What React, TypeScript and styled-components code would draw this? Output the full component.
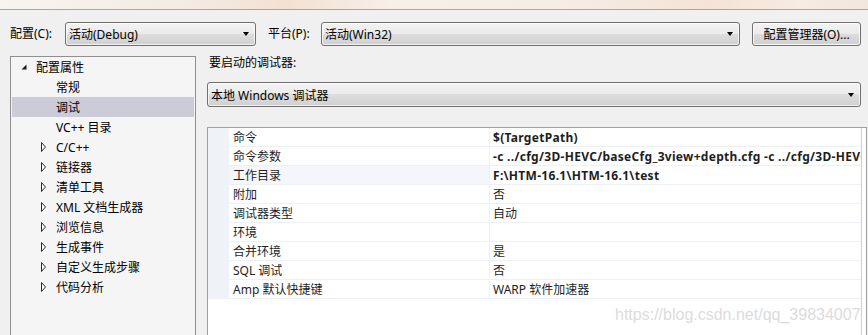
import React from "react";
import styled, { createGlobalStyle } from "styled-components";

const GlobalStyle = createGlobalStyle`
  html, body { margin: 0; padding: 0; background: #f0f0f0; }
  body {
    font-family: "Noto Sans", "Noto Sans CJK SC", sans-serif;
    font-size: 12px;
    color: #000;
  }
  * { box-sizing: border-box; }
`;

const Window = styled.div`
  position: relative;
  width: 868px;
  height: 335px;
  overflow: hidden;
  background: #f0f0f0;
`;

const TitleStrip = styled.div`
  height: 10px;
  border-bottom: 1px solid #a7a7a7;
  background: linear-gradient(
    to right,
    #f8f4f0 0%,
    #f4ece5 20%,
    #f3e1d3 33%,
    #f7efe8 45%,
    #f6ede5 65%,
    #f4e3d6 82%,
    #f7ebe2 92%,
    #f3e6dc 100%
  );
`;

const Toolbar = styled.div`
  display: flex;
  align-items: center;
  height: 24px;
  margin-top: 12px;
  padding-left: 10px;
`;

const Label = styled.div<{ $w: number; $ml?: number }>`
  width: ${(p) => p.$w}px;
  margin-left: ${(p) => p.$ml ?? 0}px;
  white-space: nowrap;
  line-height: 16px;
`;

const Combo = styled.div<{ $w: number; $h?: number; $ml?: number; $mt?: number }>`
  position: relative;
  display: flex;
  align-items: center;
  width: ${(p) => p.$w}px;
  height: ${(p) => p.$h ?? 24}px;
  margin-left: ${(p) => p.$ml ?? 0}px;
  margin-top: ${(p) => p.$mt ?? 0}px;
  padding-left: 3px;
  border: 1px solid #707070;
  border-radius: 3px;
  background: linear-gradient(
    to bottom,
    #f3f3f3 0%,
    #ebebeb 48%,
    #dddddd 50%,
    #d0d0d0 100%
  );
  box-shadow: inset 0 0 0 1px rgba(255, 255, 255, 0.7);
  white-space: nowrap;
`;

const Arrow = styled.div`
  position: absolute;
  right: 6px;
  top: 50%;
  margin-top: -2px;
  width: 0;
  height: 0;
  border-left: 3.5px solid transparent;
  border-right: 3.5px solid transparent;
  border-top: 4px solid #000;
`;

const Button = styled.div<{ $w: number; $ml: number }>`
  display: flex;
  align-items: center;
  justify-content: center;
  width: ${(p) => p.$w}px;
  height: 24px;
  margin-left: ${(p) => p.$ml}px;
  border: 1px solid #707070;
  border-radius: 3px;
  background: linear-gradient(
    to bottom,
    #f2f2f2 0%,
    #ebebeb 48%,
    #dddddd 50%,
    #cfcfcf 100%
  );
  box-shadow: inset 0 0 0 1px rgba(255, 255, 255, 0.8);
  white-space: nowrap;
`;

const Main = styled.div`
  display: flex;
  margin-top: 10px;
  padding-left: 10px;
`;

const TreePanel = styled.div`
  width: 186px;
  height: 300px;
  border: 1px solid #8e8f8f;
  background: #f5f5f5;
  padding: 0 1px;
`;

const TreeRow = styled.div<{ $level: number; $selected?: boolean }>`
  display: flex;
  align-items: center;
  height: 20px;
  padding-left: ${(p) => 9 + p.$level * 20}px;
  background: ${(p) => (p.$selected ? "#cbccd8" : "transparent")};
  white-space: nowrap;
`;

const ExpanderSlot = styled.div`
  width: 15px;
  height: 20px;
  display: flex;
  align-items: center;
`;

const RightPane = styled.div`
  display: flex;
  flex-direction: column;
  margin-left: 11px;
`;

const Caption = styled.div`
  height: 14px;
  line-height: 14px;
  padding-left: 2px;
`;

const PropGrid = styled.div`
  display: flex;
  width: 660px;
  height: 220px;
  margin-top: 20px;
  border: 1px solid #a0a0a0;
  background: #fff;
`;

const GridContent = styled.div`
  width: 654px;
  border-right: 1px solid #cfcfcf;
  overflow: hidden;
`;

const Row = styled.div`
  display: grid;
  grid-template-columns: 21px 261px 1fr;
  height: 19px;
`;

const Margin = styled.div`
  background: #eff2f9;
`;

const NameCell = styled.div<{ $alt?: boolean }>`
  display: flex;
  align-items: center;
  padding-left: 4px;
  border-bottom: 1px solid #eef0f5;
  border-right: 1px solid #eef0f5;
  background: ${(p) => (p.$alt ? "#f4f6fb" : "#fff")};
  color: #1e1e1e;
  white-space: nowrap;
`;

const ValueCell = styled.div<{ $bold?: boolean }>`
  display: flex;
  align-items: center;
  padding-left: 3px;
  border-bottom: 1px solid #eef0f5;
  font-weight: ${(p) => (p.$bold ? 700 : 400)};
  letter-spacing: ${(p) => (p.$bold ? "0.3px" : "0")};
  color: #1e1e1e;
  white-space: nowrap;
  overflow: hidden;
  min-width: 0;
`;

const Watermark = styled.div`
  position: absolute;
  left: 615px;
  top: 306px;
  font-family: "Liberation Sans", Arial, sans-serif;
  font-size: 16px;
  color: #dcdcdc;
  white-space: nowrap;
  pointer-events: none;
`;

const ExpandedIcon = () => (
  <svg width="6" height="6" viewBox="0 0 6 6">
    <polygon points="5.5,0.5 5.5,5.5 0.5,5.5" fill="#1a1a1a" />
  </svg>
);

const CollapsedIcon = () => (
  <svg width="6" height="10" viewBox="0 0 6 10">
    <polygon
      points="0.5,0.5 4.5,5 0.5,9.5"
      fill="#fff"
      stroke="#2a2a2a"
      strokeWidth="1"
    />
  </svg>
);

type TreeItem = { label: string; level: number; expander?: "open" | "closed"; selected?: boolean };

const treeItems: TreeItem[] = [
  { label: "配置属性", level: 0, expander: "open" },
  { label: "常规", level: 1 },
  { label: "调试", level: 1, selected: true },
  { label: "VC++ 目录", level: 1 },
  { label: "C/C++", level: 1, expander: "closed" },
  { label: "链接器", level: 1, expander: "closed" },
  { label: "清单工具", level: 1, expander: "closed" },
  { label: "XML 文档生成器", level: 1, expander: "closed" },
  { label: "浏览信息", level: 1, expander: "closed" },
  { label: "生成事件", level: 1, expander: "closed" },
  { label: "自定义生成步骤", level: 1, expander: "closed" },
  { label: "代码分析", level: 1, expander: "closed" },
];

type Prop = { name: string; value: string; bold?: boolean; alt?: boolean };

const props: Prop[] = [
  { name: "命令", value: "$(TargetPath)", bold: true },
  {
    name: "命令参数",
    value: "-c ../cfg/3D-HEVC/baseCfg_3view+depth.cfg -c ../cfg/3D-HEVC/NonCTC/fullRes.cfg",
    bold: true,
  },
  { name: "工作目录", value: "F:\\HTM-16.1\\HTM-16.1\\test", bold: true, alt: true },
  { name: "附加", value: "否" },
  { name: "调试器类型", value: "自动" },
  { name: "环境", value: "" },
  { name: "合并环境", value: "是" },
  { name: "SQL 调试", value: "否" },
  { name: "Amp 默认快捷键", value: "WARP 软件加速器" },
];

export default function App() {
  return (
    <>
      <GlobalStyle />
      <Window>
        <TitleStrip />
        <Toolbar>
          <Label $w={55}>配置(C):</Label>
          <Combo $w={191}>
            活动(Debug)
            <Arrow />
          </Combo>
          <Label $w={53} $ml={12}>
            平台(P):
          </Label>
          <Combo $w={419}>
            活动(Win32)
            <Arrow />
          </Combo>
          <Button $w={109} $ml={12}>
            配置管理器(O)...
          </Button>
        </Toolbar>
        <Main>
          <TreePanel>
            {treeItems.map((it) => (
              <TreeRow key={it.label} $level={it.level} $selected={it.selected}>
                <ExpanderSlot>
                  {it.expander === "open" && <ExpandedIcon />}
                  {it.expander === "closed" && <CollapsedIcon />}
                </ExpanderSlot>
                {it.label}
              </TreeRow>
            ))}
          </TreePanel>
          <RightPane>
            <Caption>要启动的调试器:</Caption>
            <Combo $w={654} $h={25} $mt={12}>
              本地 Windows 调试器
              <Arrow />
            </Combo>
            <PropGrid>
              <GridContent>
                {props.map((p) => (
                  <Row key={p.name}>
                    <Margin />
                    <NameCell $alt={p.alt}>{p.name}</NameCell>
                    <ValueCell $bold={p.bold}>{p.value}</ValueCell>
                  </Row>
                ))}
              </GridContent>
            </PropGrid>
          </RightPane>
        </Main>
        <Watermark>https://blog.csdn.net/qq_39834007</Watermark>
      </Window>
    </>
  );
}
